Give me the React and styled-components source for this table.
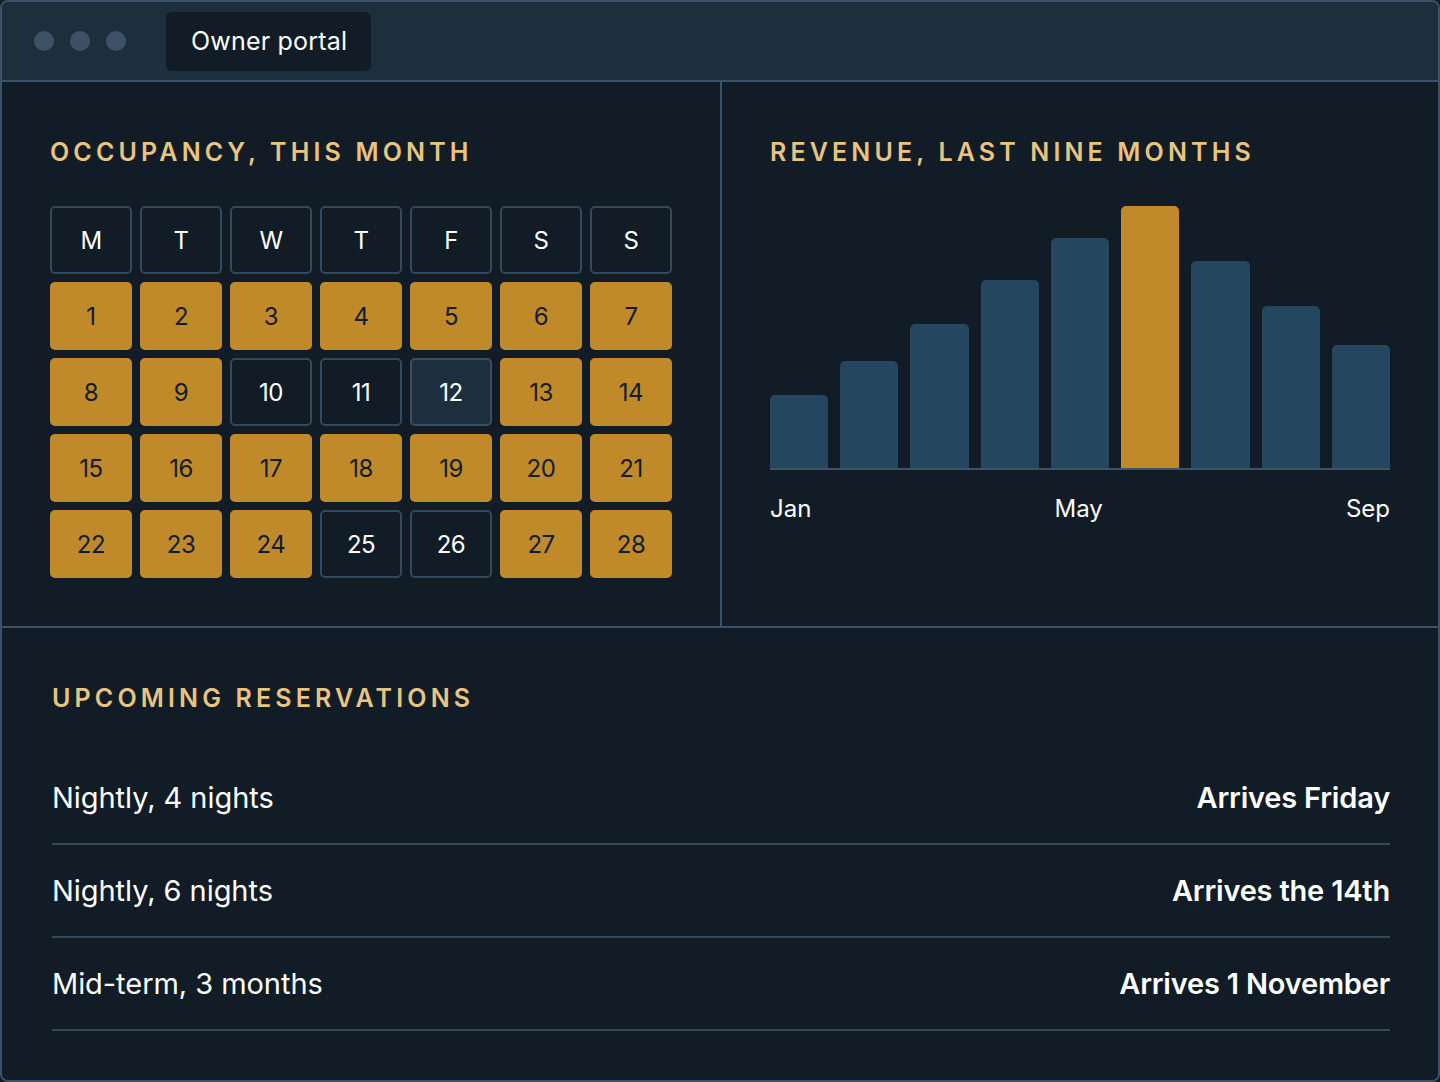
import React from "react";
import styled, { createGlobalStyle } from "styled-components";

const GlobalStyle = createGlobalStyle`
  html, body {
    margin: 0;
    padding: 0;
    background: #111c27;
  }
  * {
    box-sizing: border-box;
  }
`;

const colors = {
  bg: "#111c27",
  bar: "#1d2e3d",
  line: "#3d5266",
  cellLine: "#34495c",
  gold: "#c08a2a",
  heading: "#e9c47f",
  navy: "#24475f",
  text: "#ffffff",
};

const Window = styled.div`
  width: 1440px;
  height: 1082px;
  display: flex;
  flex-direction: column;
  background: ${colors.bg};
  border: 2px solid ${colors.line};
  border-radius: 8px;
  overflow: hidden;
  font-family: Inter, "Liberation Sans", sans-serif;
  color: ${colors.text};
`;

const TitleBar = styled.div`
  height: 80px;
  flex-shrink: 0;
  display: flex;
  align-items: center;
  padding-left: 32px;
  background: ${colors.bar};
  border-bottom: 2px solid ${colors.line};
`;

const Dots = styled.div`
  display: flex;
  gap: 16px;
`;

const Dot = styled.span`
  width: 20px;
  height: 20px;
  border-radius: 50%;
  background: #3d5166;
`;

const Tab = styled.div`
  margin-left: 40px;
  height: 59px;
  padding: 0 24px 0 25px;
  display: flex;
  align-items: center;
  background: ${colors.bg};
  border-radius: 6px;
  font-size: 25px;
  letter-spacing: 0.2px;
`;

const TopGrid = styled.div`
  display: grid;
  grid-template-columns: 720px 1fr;
  border-bottom: 2px solid ${colors.line};
`;

const Panel = styled.section`
  padding: 57px 48px 48px 48px;
  border-right: ${(p) => (p.divided ? `2px solid ${colors.line}` : "none")};
`;

const Heading = styled.h2`
  margin: 0 0 41px 0;
  font-family: Inter, "Liberation Sans", sans-serif;
  font-size: 25px;
  line-height: 26px;
  font-weight: 600;
  letter-spacing: 4.15px;
  text-transform: uppercase;
  color: ${colors.heading};
`;

const Calendar = styled.div`
  display: grid;
  grid-template-columns: repeat(7, 82px);
  grid-auto-rows: 68px;
  gap: 8px;
`;

const Cell = styled.div`
  display: flex;
  align-items: center;
  justify-content: center;
  border-radius: 5px;
  font-size: 24px;
  letter-spacing: -0.5px;
  background: ${(p) =>
    p.kind === "booked" ? colors.gold : p.kind === "today" ? colors.bar : "transparent"};
  color: ${(p) => (p.kind === "booked" ? colors.bg : colors.text)};
  border: 2px solid
    ${(p) =>
      p.kind === "booked" ? colors.gold : p.kind === "today" ? "#3a4f63" : colors.cellLine};
`;

const Chart = styled.div`
  height: 264px;
  display: flex;
  align-items: flex-end;
  gap: 12px;
  border-bottom: 2px solid ${colors.line};
`;

const Bar = styled.div`
  flex: 1;
  border-radius: 5px 5px 0 0;
  background: ${(p) => (p.highlight ? colors.gold : colors.navy)};
`;

const Axis = styled.div`
  display: flex;
  justify-content: space-between;
  margin-top: 24px;
  font-size: 24px;
  line-height: 30px;
  letter-spacing: 0;
`;

const Bottom = styled.section`
  flex: 1;
  padding: 57px 48px 0 50px;
`;

const Row = styled.div`
  height: 93px;
  display: flex;
  align-items: center;
  justify-content: space-between;
  border-bottom: 2px solid ${colors.cellLine};
  font-size: 29px;
`;

const Stay = styled.span`
  font-weight: 400;
  letter-spacing: -0.05px;
`;

const Arrival = styled.span`
  font-weight: 600;
  letter-spacing: -0.2px;
`;

const weekdays = ["M", "T", "W", "T", "F", "S", "S"];
const free = [10, 11, 25, 26];
const today = 12;
const days = Array.from({ length: 28 }, (_, i) => i + 1);

const revenue = [
  { month: "Jan", value: 73 },
  { month: "Feb", value: 107 },
  { month: "Mar", value: 144 },
  { month: "Apr", value: 188 },
  { month: "May", value: 230 },
  { month: "Jun", value: 262, highlight: true },
  { month: "Jul", value: 207 },
  { month: "Aug", value: 162 },
  { month: "Sep", value: 123 },
];

const reservations = [
  { stay: "Nightly, 4 nights", arrival: "Arrives Friday" },
  { stay: "Nightly, 6 nights", arrival: "Arrives the 14th" },
  { stay: "Mid-term, 3 months", arrival: "Arrives 1 November" },
];

const dayKind = (day) =>
  day === today ? "today" : free.includes(day) ? "free" : "booked";

export default function App() {
  return (
    <>
      <GlobalStyle />
      <Window>
        <TitleBar>
          <Dots>
            <Dot />
            <Dot />
            <Dot />
          </Dots>
          <Tab>Owner portal</Tab>
        </TitleBar>

        <TopGrid>
          <Panel divided>
            <Heading>Occupancy, this month</Heading>
            <Calendar>
              {weekdays.map((d, i) => (
                <Cell key={`wd-${i}`} kind="head">
                  {d}
                </Cell>
              ))}
              {days.map((day) => (
                <Cell key={day} kind={dayKind(day)}>
                  {day}
                </Cell>
              ))}
            </Calendar>
          </Panel>

          <Panel>
            <Heading>Revenue, last nine months</Heading>
            <Chart>
              {revenue.map((r) => (
                <Bar
                  key={r.month}
                  highlight={r.highlight}
                  style={{ height: `${(r.value / 262) * 100}%` }}
                />
              ))}
            </Chart>
            <Axis>
              <span>Jan</span>
              <span>May</span>
              <span>Sep</span>
            </Axis>
          </Panel>
        </TopGrid>

        <Bottom>
          <Heading>Upcoming reservations</Heading>
          {reservations.map((r) => (
            <Row key={r.stay}>
              <Stay>{r.stay}</Stay>
              <Arrival>{r.arrival}</Arrival>
            </Row>
          ))}
        </Bottom>
      </Window>
    </>
  );
}
